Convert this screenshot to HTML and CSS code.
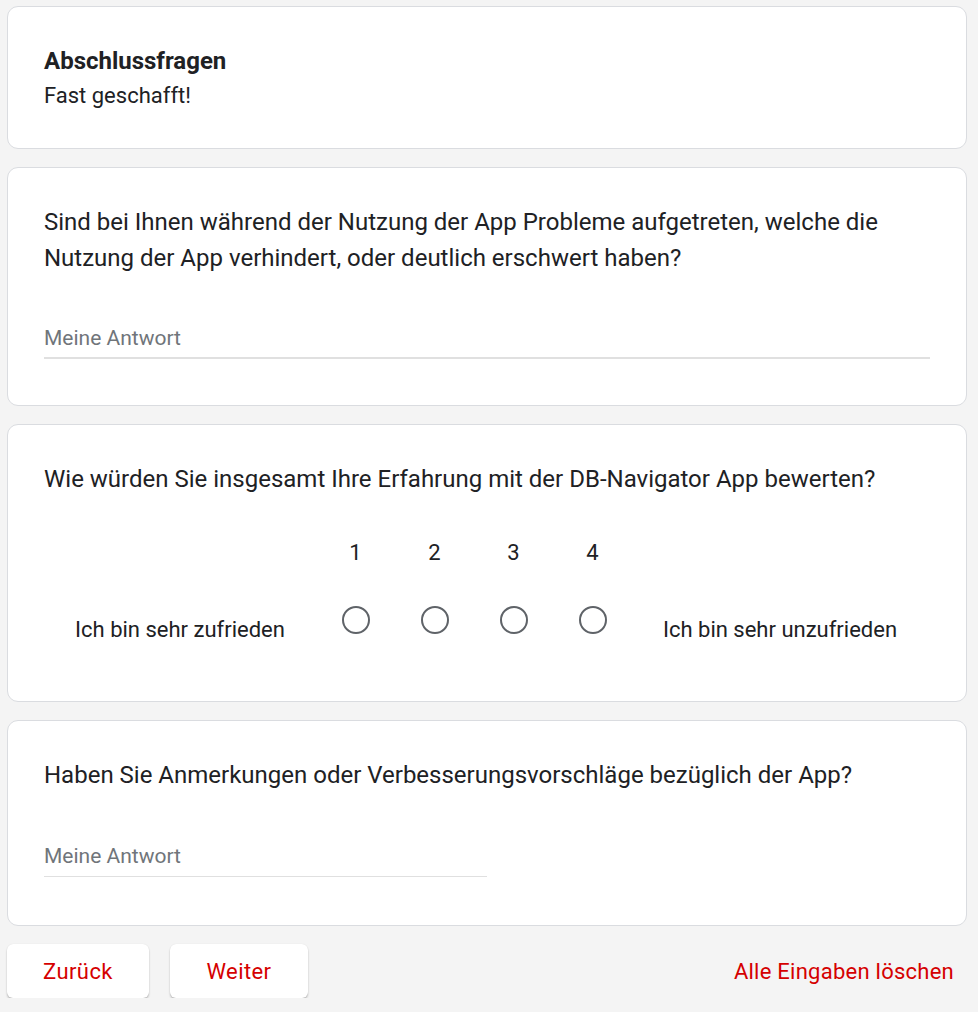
FILE: index.html
```html
<!DOCTYPE html>
<html lang="de">
<head>
<meta charset="utf-8">
<title>Abschlussfragen</title>
<link rel="stylesheet" href="styles.css">
</head>
<body>
<div class="page">
  <div class="card header-card">
    <div class="title">Abschlussfragen</div>
    <div class="subtitle">Fast geschafft!</div>
  </div>

  <div class="card q-card q-text">
    <div class="question">Sind bei Ihnen während der Nutzung der App Probleme aufgetreten, welche die Nutzung der App verhindert, oder deutlich erschwert haben?</div>
    <div class="input full"><span class="placeholder">Meine Antwort</span></div>
  </div>

  <div class="card q-card scale-card">
    <div class="question">Wie würden Sie insgesamt Ihre Erfahrung mit der DB-Navigator App bewerten?</div>
    <div class="scale">
      <div class="scale-label left">Ich bin sehr zufrieden</div>
      <div class="scale-opt"><span class="num">1</span><span class="radio"></span></div>
      <div class="scale-opt"><span class="num">2</span><span class="radio"></span></div>
      <div class="scale-opt"><span class="num">3</span><span class="radio"></span></div>
      <div class="scale-opt"><span class="num">4</span><span class="radio"></span></div>
      <div class="scale-label right">Ich bin sehr unzufrieden</div>
    </div>
  </div>

  <div class="card q-card last-card">
    <div class="question">Haben Sie Anmerkungen oder Verbesserungsvorschläge bezüglich der App?</div>
    <div class="input half"><span class="placeholder">Meine Antwort</span></div>
  </div>

  <div class="nav">
    <button class="btn btn-back">Zurück</button>
    <button class="btn btn-next">Weiter</button>
    <span class="spacer"></span>
    <button class="link">Alle Eingaben löschen</button>
  </div>
</div>
</body>
</html>
```

FILE: styles.css
```css
html, body {
  margin: 0;
  padding: 0;
  background: #f4f4f4;
}
body {
  font-family: Roboto, "Liberation Sans", Arial, sans-serif;
  color: #202124;
}
.page {
  width: 960px;
  padding: 6px 0 0 7px;
  display: flex;
  flex-direction: column;
  gap: 18px;
}
.card {
  background: #fff;
  border: 1px solid #dadce0;
  border-radius: 11px;
  box-sizing: border-box;
}
.header-card {
  height: 143px;
  padding: 38px 36px 0;
}
.title {
  font-size: 24px;
  font-weight: 700;
  line-height: 32px;
}
.subtitle {
  font-size: 22px;
  line-height: 32px;
  margin-top: 3px;
}
.q-card {
  padding: 35px 36px 0;
}
.q-text { height: 239px; padding-top: 36px; }
.scale-card { height: 278px; padding-top: 36px; }
.last-card { height: 206px; padding-top: 36px; }
.question {
  font-size: 24px;
  line-height: 36px;
}
.input {
  height: 32px;
  box-sizing: content-box;
}
.input.full {
  width: 886px;
  margin-top: 46px;
  padding-bottom: 3px;
  border-bottom: 2px solid #e0e0e0;
}
.input.half {
  width: 443px;
  margin-top: 47px;
  padding-bottom: 4px;
  border-bottom: 1px solid #e0e0e0;
}
.placeholder {
  font-size: 21px;
  line-height: 32px;
  color: #70757a;
  display: block;
}
.scale {
  display: flex;
  align-items: flex-end;
  margin-top: 44px;
}
.scale-label {
  font-size: 22px;
  line-height: 24px;
  text-align: center;
  margin-bottom: -8px;
}
.scale-label.left { width: 272px; }
.scale-label.right { width: 296px; }
.scale-opt {
  width: 79px;
  display: flex;
  flex-direction: column;
  align-items: center;
  gap: 41px;
}
.num {
  font-size: 22px;
  line-height: 24px;
}
.radio {
  width: 24px;
  height: 24px;
  border: 2.7px solid #5f6368;
  border-radius: 50%;
}
.nav {
  display: flex;
  align-items: center;
  gap: 21px;
  width: 959px;
}
.btn {
  height: 54px;
  background: #fff;
  border: none;
  border-radius: 6px;
  box-shadow: 0 2px 2px rgba(0,0,0,0.22), 0 0 1px rgba(0,0,0,0.12);
  font-family: Roboto, "Liberation Sans", Arial, sans-serif;
  font-size: 22px;
  font-weight: 400;
  letter-spacing: 0.4px;
  color: #d50000;
  padding: 0;
}
.btn-back { width: 142px; }
.btn-next { width: 138px; }
.spacer { flex: 1; }
.link {
  background: none;
  border: none;
  padding: 0 12px 0 0;
  font-family: Roboto, "Liberation Sans", Arial, sans-serif;
  font-size: 22px;
  font-weight: 400;
  letter-spacing: 0.25px;
  color: #d50000;
}
```
